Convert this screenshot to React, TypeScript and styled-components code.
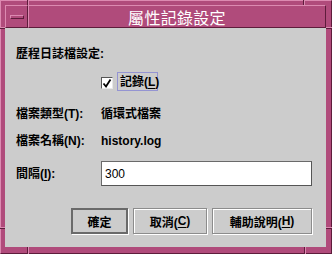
import React from "react";
import styled, { createGlobalStyle } from "styled-components";

const Global = createGlobalStyle`
  html, body { margin: 0; padding: 0; background: #cccccc; }
  body { font-family: "Liberation Sans", "Noto Sans CJK TC", sans-serif; }
  * { box-sizing: border-box; }
`;

const PINK = "#b04b7b";
const LIGHT = "#dc8ab1";
const DARK = "#5e1c3b";

const Frame = styled.div`
  position: relative;
  width: 332px;
  height: 254px;
  background: ${PINK};
  border-style: solid;
  border-width: 1px;
  border-color: ${LIGHT} ${DARK} ${DARK} ${LIGHT};
  padding: 4px 5px 6px 4px;
  display: flex;
  flex-direction: column;
`;

const Notch = styled.span<{ $x: number; $y: number; $vertical?: boolean; $len: number }>`
  position: absolute;
  left: ${(p) => p.$x}px;
  top: ${(p) => p.$y}px;
  width: ${(p) => (p.$vertical ? 2 : p.$len)}px;
  height: ${(p) => (p.$vertical ? p.$len : 2)}px;
  border-style: solid;
  border-color: ${DARK};
  border-width: ${(p) => (p.$vertical ? "0 1px 0 0" : "0 0 1px 0")};
  background: ${LIGHT};
  ${(p) => (p.$vertical ? "border-right-color: " + LIGHT + "; background: " + DARK + ";" : "")}
`;

const TitleBar = styled.div`
  display: flex;
  height: 23px;
  flex: none;
`;

const Raised = styled.div`
  border-style: solid;
  border-width: 1px;
  border-color: ${LIGHT} ${DARK} ${DARK} ${LIGHT};
  background: ${PINK};
`;

const MenuBox = styled(Raised)`
  width: 23px;
  display: flex;
  align-items: center;
  justify-content: center;
`;

const MinBar = styled(Raised)`
  width: 14px;
  height: 4px;
  margin-top: 1px;
  margin-left: 1px;
`;

const TitleBox = styled(Raised)`
  flex: 1;
  display: flex;
  align-items: center;
  justify-content: center;
  color: #ffffff;
  font-family: "Noto Sans CJK TC", "Liberation Sans", sans-serif;
  font-size: 16px;
  font-weight: 400;
  letter-spacing: 0.3px;
  line-height: 1;
  padding-top: 1px;
`;

const Content = styled.div`
  flex: 1;
  background: #cccccc;
  display: flex;
  flex-direction: column;
  padding: 16px 14px 0 11px;
`;

const Row = styled.div<{ $top: number; $h: number }>`
  display: flex;
  align-items: center;
  margin-top: ${(p) => p.$top}px;
  height: ${(p) => p.$h}px;
  flex: none;
`;

const Text = styled.span`
  font-size: 12px;
  font-weight: 700;
  color: #000;
  white-space: nowrap;
  line-height: 1;
`;

const Label = styled(Text)`
  width: 85px;
  flex: none;
`;

const Spacer = styled.div`
  width: 85px;
  flex: none;
`;

const Mn = styled.span`
  text-decoration: underline;
  text-underline-offset: 2px;
  text-decoration-thickness: 1px;
`;

const CheckBox = styled.span`
  width: 12px;
  height: 12px;
  flex: none;
  background: #ffffff;
  border-style: solid;
  border-width: 1px;
  border-color: #555555 #e8e8e8 #e8e8e8 #555555;
  display: flex;
  align-items: center;
  justify-content: center;
  margin-top: 2px;
`;

const FocusLabel = styled(Text)`
  margin-left: 4px;
  height: 19px;
  width: 41px;
  border: 1px solid #9494d2;
  display: flex;
  align-items: center;
  padding-left: 2px;
  margin-top: -1px;
`;

const Field = styled.input`
  width: 212px;
  height: 25px;
  background: #ffffff;
  border-style: solid;
  border-width: 1px;
  border-color: #6a6a6a #555555 #555555 #6a6a6a;
  font-family: "Liberation Sans", sans-serif;
  font-size: 12px;
  color: #000;
  padding: 0 0 0 3px;
  margin: 0;
  outline: none;
`;

const Buttons = styled.div`
  display: flex;
  justify-content: flex-end;
  gap: 5px;
  margin-top: 22px;
  height: 27px;
  flex: none;
`;

const Button = styled.button<{ $w: number; $default?: boolean }>`
  width: ${(p) => p.$w}px;
  height: 26px;
  margin: 0;
  padding: 0;
  background: #cccccc;
  font-family: "Liberation Sans", "Noto Sans CJK TC", sans-serif;
  font-size: 12px;
  font-weight: 700;
  color: #000;
  display: flex;
  align-items: center;
  justify-content: center;
  border-style: solid;
  border-width: ${(p) => (p.$default ? 2 : 1)}px;
  border-color: ${(p) => (p.$default ? "#6a6a6a" : "#8c8c8c")};
  box-shadow: ${(p) =>
    p.$default ? "1px 1px 0 #ffffff" : "inset 1px 1px 0 #ffffff, 1px 1px 0 #ffffff"};
`;

export default function App() {
  return (
    <>
      <Global />
      <Frame>
        <Notch $vertical $x={26} $y={-1} $len={5} />
        <Notch $vertical $x={302} $y={-1} $len={5} />
        <Notch $vertical $x={26} $y={246} $len={7} />
        <Notch $vertical $x={303} $y={246} $len={7} />
        <Notch $x={-1} $y={26} $len={5} />
        <Notch $x={325} $y={26} $len={6} />
        <Notch $x={-1} $y={226} $len={5} />
        <Notch $x={325} $y={226} $len={6} />
        <TitleBar>
          <MenuBox>
            <MinBar />
          </MenuBox>
          <TitleBox>屬性記錄設定</TitleBox>
        </TitleBar>
        <Content>
          <Row $top={0} $h={20}>
            <Text>歷程日誌檔設定:</Text>
          </Row>
          <Row $top={8} $h={20}>
            <Spacer />
            <CheckBox>
              <svg width="10" height="10" viewBox="0 0 10 10">
                <path d="M1.5 5.5 L4 8.5 L8.5 1.5" stroke="#000" strokeWidth="1.8" fill="none" />
              </svg>
            </CheckBox>
            <FocusLabel>
              記錄(<Mn>L</Mn>)
            </FocusLabel>
          </Row>
          <Row $top={12} $h={20}>
            <Label>檔案類型(T):</Label>
            <Text>循環式檔案</Text>
          </Row>
          <Row $top={7} $h={20}>
            <Label>檔案名稱(N):</Label>
            <Text>history.log</Text>
          </Row>
          <Row $top={10} $h={25}>
            <Label>
              間隔(<Mn>I</Mn>):
            </Label>
            <Field defaultValue="300" readOnly />
          </Row>
          <Buttons>
            <Button $w={57} $default>
              確定
            </Button>
            <Button $w={74}>
              取消(<Mn>C</Mn>)
            </Button>
            <Button $w={100}>
              輔助說明(<Mn>H</Mn>)
            </Button>
          </Buttons>
        </Content>
      </Frame>
    </>
  );
}
